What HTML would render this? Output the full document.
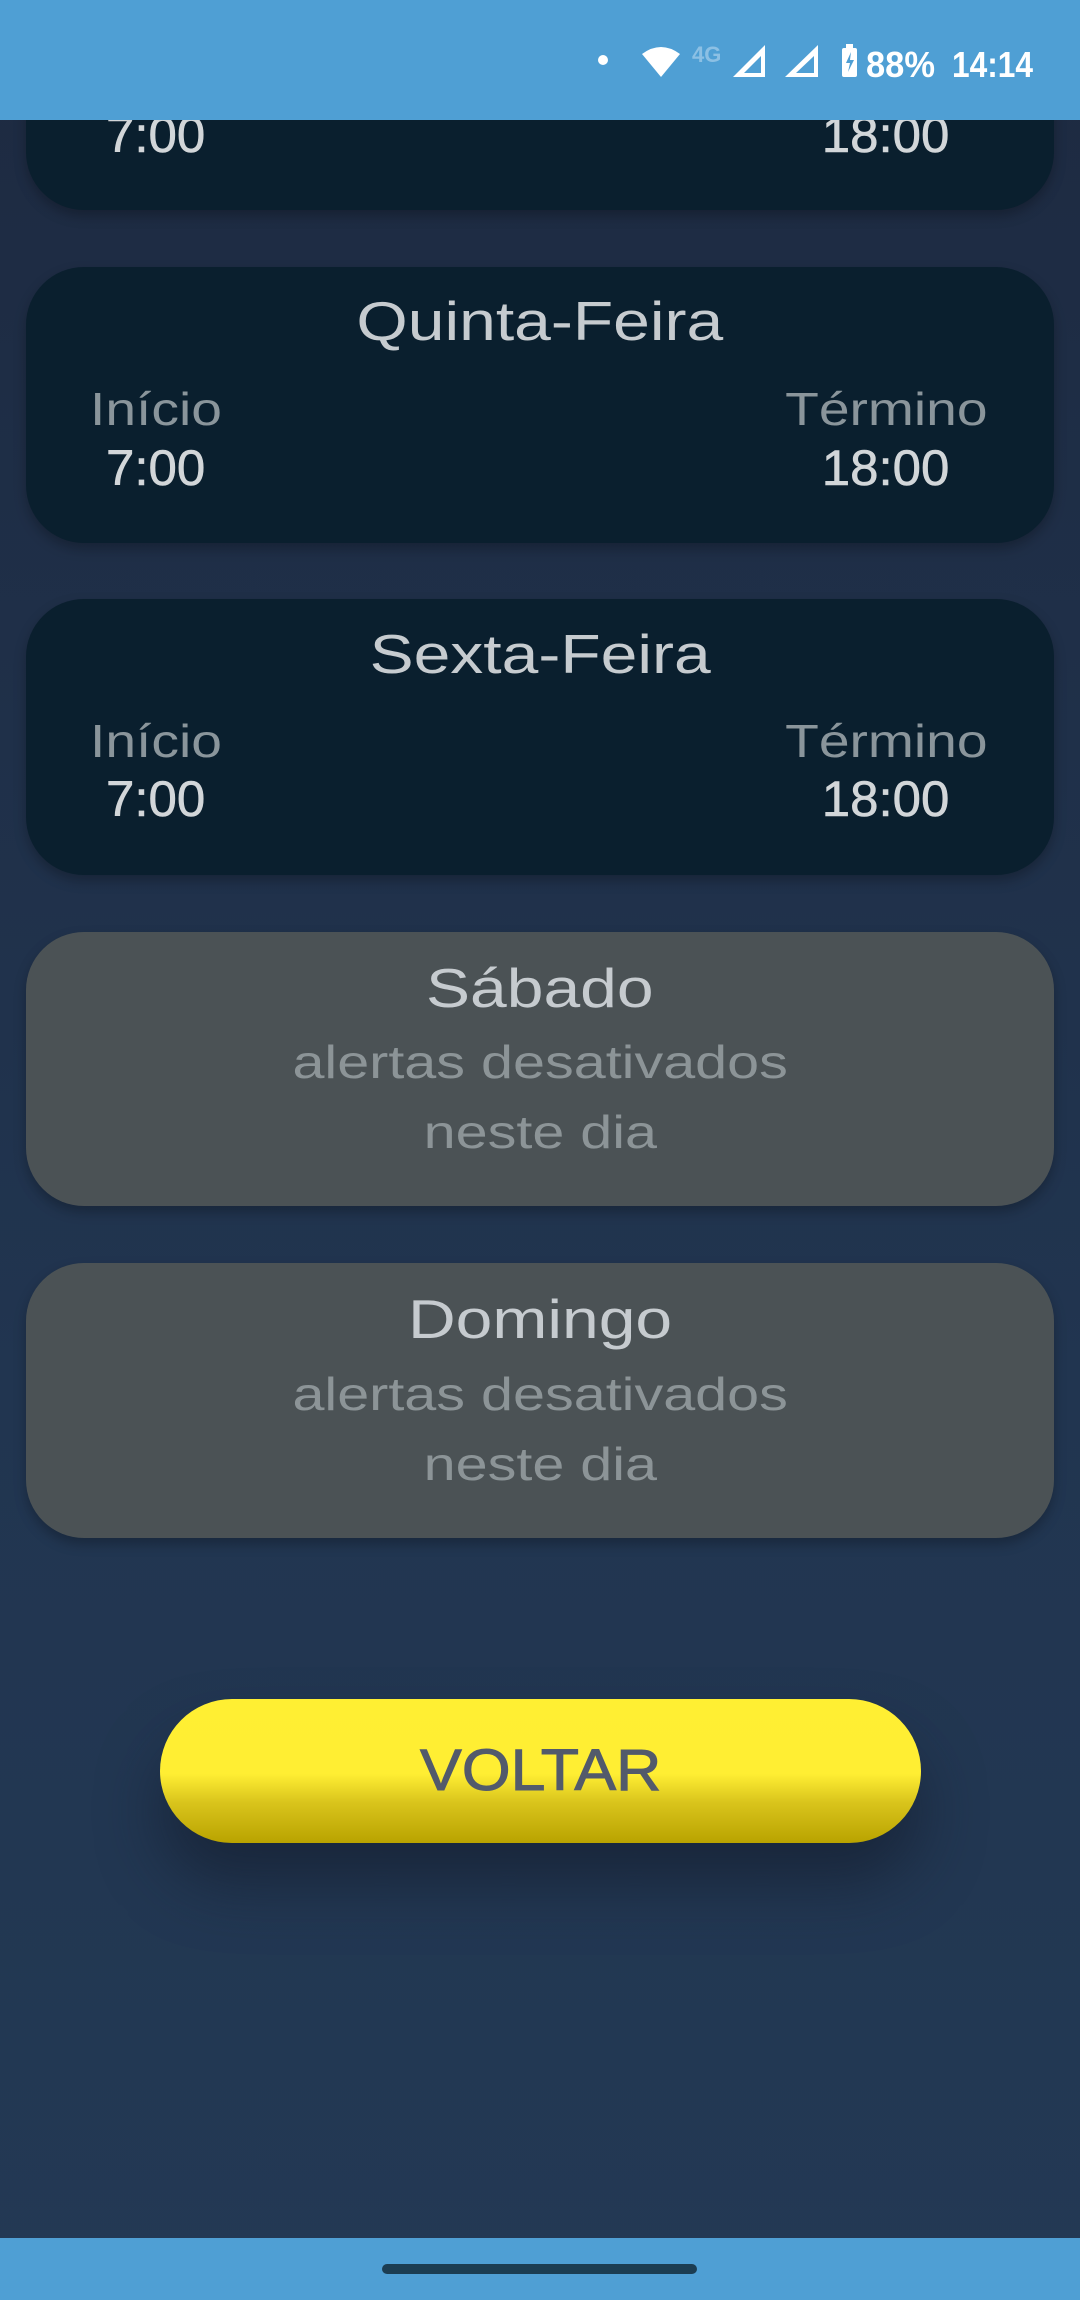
<!DOCTYPE html>
<html><head><meta charset="utf-8"><style>
*{margin:0;padding:0;box-sizing:border-box}
body{width:1080px;height:2300px;overflow:hidden;position:relative;font-family:"Liberation Sans",sans-serif;background:linear-gradient(#1d2a41,#213550 60%,#233954)}
.sb{position:absolute;left:0;top:0;width:1080px;height:120px;background:#4f9fd4;z-index:5}
.nav{position:absolute;left:0;top:2238px;width:1080px;height:62px;background:#4f9fd4}
.home{position:absolute;left:382px;top:2264px;width:315px;height:10px;border-radius:5px;background:#1c3d52}
.card{position:absolute;left:26px;width:1028px;border-radius:58px;background:#0a1f2e;box-shadow:0 6px 12px rgba(0,0,0,.25)}
.g{background:#4b5255}
.t,.l,.v,.d{position:absolute;text-align:center;line-height:1}
.t{width:100%;font-size:55px;color:#c6cbcf}
.l{width:230px;font-size:46px;color:#8a959b}
.v{width:230px;font-size:50px;color:#d2d6d9}
.d{width:100%;font-size:46px;color:#8c9497}
.t span,.l span,.d span{display:inline-block;transform:scaleX(1.2)}
.d span{transform:scaleX(1.25)}
.v span{display:inline-block;transform:scaleX(1.02);-webkit-text-stroke:0.6px #d2d6d9}
.btn{position:absolute;left:160px;top:1699px;width:761px;height:144px;border-radius:72px;background:linear-gradient(#ffef33 0%,#ffee33 52%,#d9c41c 72%,#b9a300 100%);box-shadow:0 40px 60px rgba(20,28,45,.6);text-align:center;line-height:144px;font-size:58px;color:#525a6b}
.btn span{display:inline-block;transform:scaleX(1.08);-webkit-text-stroke:1px #525a6b}
</style></head><body>
<div class="sb">
<svg width="1080" height="120" style="position:absolute;left:0;top:0">
<circle cx="603" cy="60" r="5" fill="#fff"/>
<path d="M642 54 Q661 40 680 54 L661 77 Z" fill="#fff"/>
<text x="692" y="62" font-family="Liberation Sans" font-weight="bold" font-size="22" fill="#8cc0e4">4G</text>
<path d="M733 77 L765 45 L765 77 Z M744 73 L761 73 L761 56 Z" fill="#fff" fill-rule="evenodd"/>
<path d="M785 77 L818 45 L818 77 Z M796 73 L814 73 L814 56 Z" fill="#fff" fill-rule="evenodd"/>
<rect x="842" y="48" width="15" height="29" rx="2" fill="#fff"/><rect x="846" y="44" width="7" height="5" fill="#fff"/>
<path d="M851 52 L846 63 L850 63 L848 72 L854 60 L850 60 Z" fill="#4f9fd4"/>
<text x="866" y="77" font-family="Liberation Sans" font-weight="bold" font-size="36" fill="#fff" textLength="69" lengthAdjust="spacingAndGlyphs">88%</text>
<text x="952" y="77" font-family="Liberation Sans" font-weight="bold" font-size="36" fill="#fff" textLength="81" lengthAdjust="spacingAndGlyphs">14:14</text>
</svg>
</div>
<div class="card" style="top:-66px;height:276px">
<div class="v" style="left:15px;top:176px"><span>7:00</span></div>
<div class="v" style="left:745px;top:176px"><span>18:00</span></div>
</div>
<div class="card" style="top:267px;height:276px">
<div class="t" style="top:27px"><span>Quinta-Feira</span></div>
<div class="l" style="left:15px;top:119px"><span>Início</span></div>
<div class="l" style="left:745px;top:119px"><span>Término</span></div>
<div class="v" style="left:15px;top:176px"><span>7:00</span></div>
<div class="v" style="left:745px;top:176px"><span>18:00</span></div>
</div>
<div class="card" style="top:599px;height:276px">
<div class="t" style="top:28px"><span>Sexta-Feira</span></div>
<div class="l" style="left:15px;top:119px"><span>Início</span></div>
<div class="l" style="left:745px;top:119px"><span>Término</span></div>
<div class="v" style="left:15px;top:175px"><span>7:00</span></div>
<div class="v" style="left:745px;top:175px"><span>18:00</span></div>
</div>
<div class="card g" style="top:932px;height:274px">
<div class="t" style="top:29px"><span>Sábado</span></div>
<div class="d" style="top:107px"><span>alertas desativados</span></div>
<div class="d" style="top:177px"><span>neste dia</span></div>
</div>
<div class="card g" style="top:1263px;height:275px">
<div class="t" style="top:29px"><span>Domingo</span></div>
<div class="d" style="top:108px"><span>alertas desativados</span></div>
<div class="d" style="top:178px"><span>neste dia</span></div>
</div>
<div class="btn"><span>VOLTAR</span></div>
<div class="nav"></div>
<div class="home"></div>
</body></html>
